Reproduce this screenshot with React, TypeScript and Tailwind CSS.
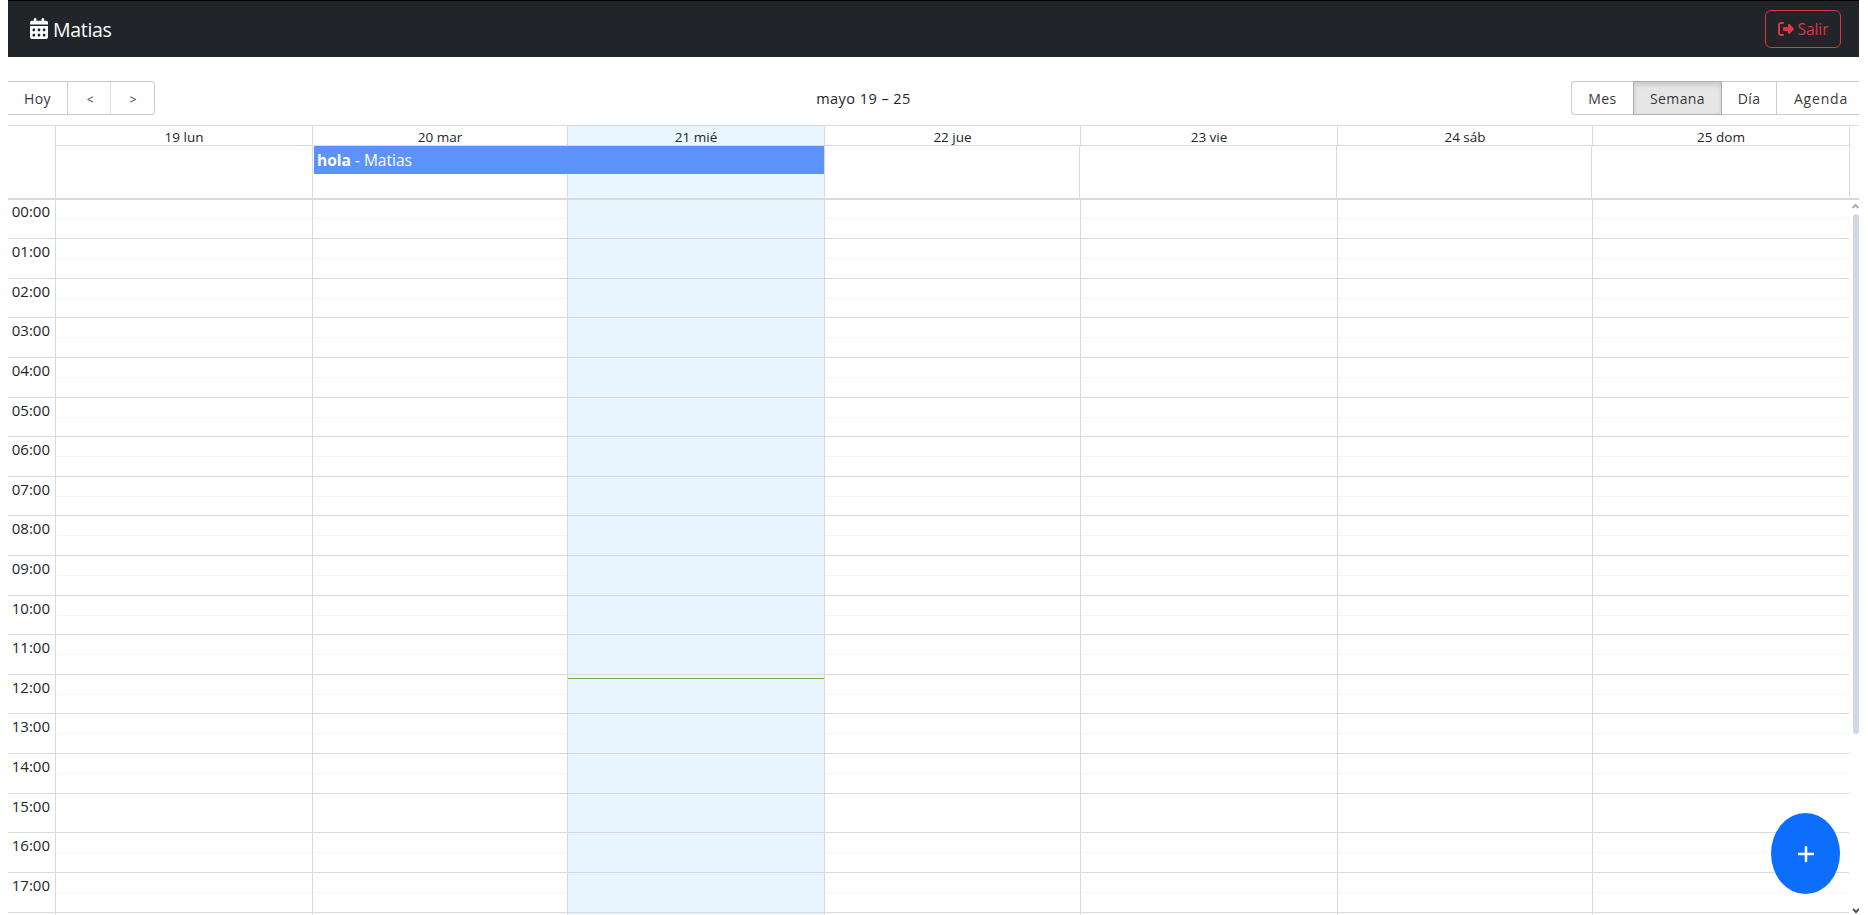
import React from "react";
import { FaCalendarDays, FaPlus, FaRightFromBracket } from "react-icons/fa6";

const days = ["19 lun", "20 mar", "21 mié", "22 jue", "23 vie", "24 sáb", "25 dom"];
const hourHeights = [39, 40, 39, 40, 40, 39, 40, 39, 40, 40, 39, 40, 39, 40, 40, 39, 40, 40];
const dayLineColumns = "grid-cols-[257px_255px_257px_256px_257px_255px_257px]";

function Navbar() {
  return (
    <header className="flex h-[57px] shrink-0 items-center justify-between border-t border-black bg-[#212529] pr-[18px] pl-[22px] text-white">
      <div className="flex items-center gap-[5px]">
        <FaCalendarDays className="mb-px h-[21px] w-[18px]" preserveAspectRatio="none" />
        <span className="pt-[2px] text-[19.5px] tracking-[-0.3px]">Matias</span>
      </div>
      <button className="flex h-[38px] w-[76px] items-center justify-center gap-1 rounded-md border border-[#dc3545] text-[#dc3545]">
        <FaRightFromBracket className="size-4" />
        <span className="pt-[2px] text-[15.5px] tracking-[-0.1px]">Salir</span>
      </button>
    </header>
  );
}

function Toolbar() {
  return (
    <div className="mt-[24px] mb-[10px] flex h-[34px] shrink-0 items-stretch text-[14px] tracking-[0.4px] text-[#373a3c]">
      <div className="flex w-[147px] rounded-r border-y border-r border-[#ccc]">
        <button className="w-[60px] border-r border-[#ccc]">Hoy</button>
        <button className="w-[43px] border-r border-[#ddd] pt-[3px] pl-[3px] text-[12px]">&lt;</button>
        <button className="flex-1 pt-[3px] pl-[2px] text-[12px]">&gt;</button>
      </div>
      <div className="flex flex-1 items-center justify-center pt-px pl-px text-[14.5px] tracking-[0.45px] text-[#212529]">mayo 19 – 25</div>
      <div className="flex w-[288px] rounded-l border-y border-l border-[#ccc]">
        <button className="w-[61px]">Mes</button>
        <button className="-my-px w-[89px] border border-[#adadad] bg-[#e6e6e6] shadow-[inset_0_3px_5px_rgba(0,0,0,0.125)]">Semana</button>
        <button className="w-[55px] border-r border-[#ccc]">Día</button>
        <button className="flex-1 pl-[6px] tracking-[0.8px]">Agenda</button>
      </div>
    </div>
  );
}

function WeekHeader() {
  return (
    <div className="flex h-[75px] shrink-0 border-t border-b-2 border-[#dadadd]">
      <div className="w-[47px]" />
      <div className="relative flex w-[1795px] flex-col border-r border-[#dadadd]">
        <div className={`grid h-[20px] ${dayLineColumns} border-b border-[#dadadd] text-[13.5px] leading-[22px] text-[#212529]`}>
          {days.map((day, i) => (
            <div key={day} className={`h-[19px] border-l border-[#dadadd] text-center ${i === 2 ? "bg-[#eaf6ff]" : ""}`}>
              {day}
            </div>
          ))}
        </div>
        <div className="grid flex-1 grid-cols-[257px_255px_257px_255px_257px_255px_258px]">
          {days.map((day, i) => (
            <div key={day} className={`border-l border-[#dadadd] ${i === 2 ? "bg-[#eaf6ff]" : ""}`} />
          ))}
        </div>
        <div className="absolute top-[20px] left-[259px] flex h-[28px] w-[510px] items-center bg-[#5b93fa] pt-[2px] pl-[3px] text-[15.5px] text-white">
          <span><b>hola</b> - Matias</span>
        </div>
      </div>
    </div>
  );
}

function TimeGrid() {
  return (
    <div className="flex min-h-0 flex-1">
      <div className="relative w-[1841px] shrink-0 overflow-hidden">
        {hourHeights.map((height, hour) => (
          <div key={hour} className="flex" style={{ height }}>
            <div className={`w-[47px] shrink-0 border-b border-[#dadadd] pr-[5px] text-right text-[15px] text-[#212529] ${hour === 0 ? "leading-[23px]" : "leading-[25px]"}`}>
              {String(hour).padStart(2, "0")}:00
            </div>
            <div className={`grid ${dayLineColumns}`}>
              {days.map((day, i) => (
                <div key={day} className={`border-b border-l border-[#dadadd] ${i === 2 ? "bg-[#e9f5fe]" : ""}`}>
                  <div className={`${hour === 0 ? "h-[19px]" : "h-[20px]"} ${i === 2 || hour === 15 ? "" : "border-b border-[#f6f6f6]"}`} />
                </div>
              ))}
            </div>
          </div>
        ))}
        <div className={`ml-[47px] grid h-[4px] ${dayLineColumns}`}>
          {days.map((day, i) => (
            <div key={day} className={`border-l border-[#dadadd] ${i === 2 ? "bg-[#e9f5fe]" : ""}`} />
          ))}
        </div>
        <div className="absolute top-[478px] left-[560px] h-px w-[256px] bg-[#74b044]" />
      </div>
      <div className="flex flex-1 flex-col items-end justify-between overflow-hidden">
        <div className="flex flex-col items-end">
          <svg className="mt-[2px] h-[12px] w-[8px]" viewBox="0 0 8 12" fill="none" stroke="#aaa" strokeWidth="2">
            <path d="M1.5 6 4.5 3l3 3" />
          </svg>
          <div className="h-[520px] w-[6px] rounded-[3px] bg-[#d0d9e2]" />
        </div>
        <svg className="h-[8px] w-[8px]" viewBox="0 0 8 8" fill="none" stroke="#555" strokeWidth="2">
          <path d="M2 2l3 3 3-3" />
        </svg>
      </div>
    </div>
  );
}

export default function App() {
  return (
    <main className="flex h-[915px] w-[1868px] flex-col overflow-hidden bg-white pr-[9px] pl-[8px] font-['Open_Sans','Noto_Sans',sans-serif]">
      <Navbar />
      <Toolbar />
      <WeekHeader />
      <TimeGrid />
      <button className="absolute top-[813px] left-[1771px] flex h-[81px] w-[69px] items-center justify-center rounded-[50%] bg-[#0d6efd] text-white">
        <FaPlus className="size-5" />
      </button>
    </main>
  );
}
